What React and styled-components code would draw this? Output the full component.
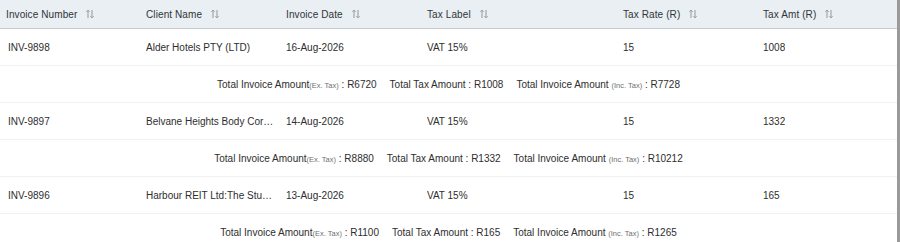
import React from "react";
import styled, { createGlobalStyle } from "styled-components";

const GlobalStyle = createGlobalStyle`
  body {
    margin: 0;
    background: #ffffff;
    font-family: "Liberation Sans", Arial, sans-serif;
  }
`;

const COLS = "140px 140px 141px 196px 140px 140px";

const TableWrap = styled.div`
  width: 897px;
  height: 242px;
  overflow: hidden;
  border-right: 3px solid #9a9a9a;
`;

const HeaderRow = styled.div`
  display: grid;
  grid-template-columns: ${COLS};
  height: 28px;
  background: #e9eff2;
  border-bottom: 1px solid #c6ccd0;
`;

const HeadCell = styled.div`
  display: flex;
  align-items: center;
  gap: 8px;
  padding-left: 6px;
  font-size: 10px;
  color: #2f353a;
  letter-spacing: 0.1px;
`;

const Row = styled.div`
  display: grid;
  grid-template-columns: ${COLS};
  height: 36px;
  border-bottom: 1px solid #f1f1f1;
`;

const Cell = styled.div`
  display: flex;
  align-items: center;
  padding-left: ${(p) => (p.$first ? "8px" : "6px")};
  padding-right: 6px;
  font-size: 10px;
  color: #2e2e2e;
  min-width: 0;

  span {
    white-space: nowrap;
    overflow: hidden;
    text-overflow: ellipsis;
  }
`;

const SummaryRow = styled.div`
  display: flex;
  justify-content: center;
  align-items: center;
  gap: 13px;
  height: 36px;
  border-bottom: 1px solid #f1f1f1;
  font-size: 10px;
  color: #2e2e2e;
`;

const SummaryItem = styled.div`
  white-space: nowrap;
`;

const Small = styled.span`
  font-size: 7.5px;
  color: #6f6f6f;
`;

function SortIcon() {
  return (
    <svg width="10" height="10" viewBox="0 0 10 10" fill="none" stroke="#8a9096" strokeWidth="0.9">
      <path d="M3 9V1.2M1.4 2.8L3 1.2L4.6 2.8" />
      <path d="M7 1V8.8M5.4 7.2L7 8.8L8.6 7.2" />
    </svg>
  );
}

const headers = ["Invoice Number", "Client Name", "Invoice Date", "Tax Label", "Tax Rate (R)", "Tax Amt (R)"];

const invoices = [
  { no: "INV-9898", client: "Alder Hotels PTY (LTD)", date: "16-Aug-2026", label: "VAT 15%", rate: "15", amt: "1008", ex: "R6720", tax: "R1008", inc: "R7728" },
  { no: "INV-9897", client: "Belvane Heights Body Corporate", date: "14-Aug-2026", label: "VAT 15%", rate: "15", amt: "1332", ex: "R8880", tax: "R1332", inc: "R10212" },
  { no: "INV-9896", client: "Harbour REIT Ltd:The Studios", date: "13-Aug-2026", label: "VAT 15%", rate: "15", amt: "165", ex: "R1100", tax: "R165", inc: "R1265" },
];

export default function App() {
  return (
    <>
      <GlobalStyle />
      <TableWrap>
        <HeaderRow>
          {headers.map((h) => (
            <HeadCell key={h}>
              {h}
              <SortIcon />
            </HeadCell>
          ))}
        </HeaderRow>
        {invoices.map((inv) => (
          <React.Fragment key={inv.no}>
            <Row>
              <Cell $first><span>{inv.no}</span></Cell>
              <Cell><span>{inv.client}</span></Cell>
              <Cell><span>{inv.date}</span></Cell>
              <Cell><span>{inv.label}</span></Cell>
              <Cell><span>{inv.rate}</span></Cell>
              <Cell><span>{inv.amt}</span></Cell>
            </Row>
            <SummaryRow>
              <SummaryItem>
                Total Invoice Amount<Small>(Ex. Tax)</Small> : {inv.ex}
              </SummaryItem>
              <SummaryItem>Total Tax Amount : {inv.tax}</SummaryItem>
              <SummaryItem>
                Total Invoice Amount <Small>(Inc. Tax)</Small> : {inv.inc}
              </SummaryItem>
            </SummaryRow>
          </React.Fragment>
        ))}
      </TableWrap>
    </>
  );
}
